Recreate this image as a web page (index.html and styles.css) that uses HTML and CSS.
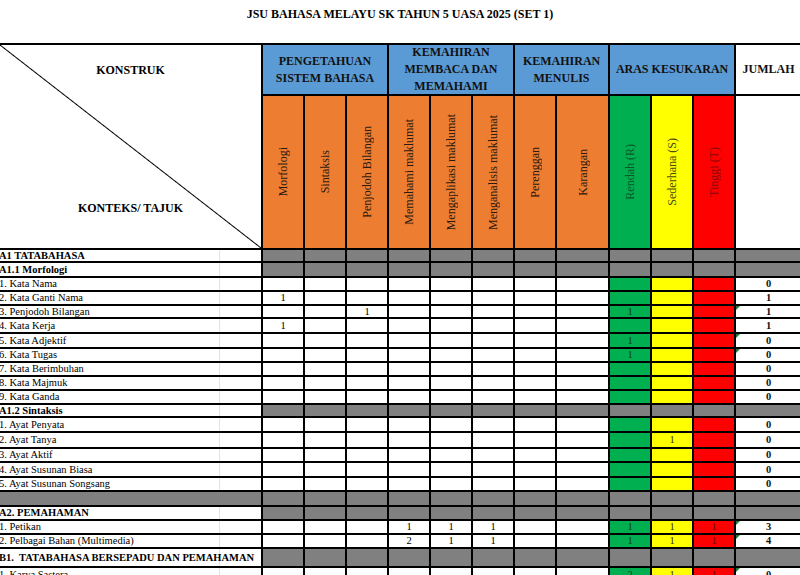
FILE: index.html
```html
<!DOCTYPE html>
<html lang="ms">
<head>
<meta charset="utf-8">
<title>JSU BAHASA MELAYU SK TAHUN 5 UASA 2025 (SET 1)</title>
<link rel="stylesheet" href="styles.css">
</head>
<body>
<div class="title">JSU BAHASA MELAYU SK TAHUN 5 UASA 2025 (SET 1)</div>
<table class="jsu">
  <colgroup>
    <col class="c-lbl"><col class="c-n"><col class="c-n"><col class="c-n"><col class="c-n"><col class="c-n"><col class="c-n"><col class="c-n"><col class="c-w"><col class="c-n"><col class="c-n"><col class="c-n"><col class="c-j">
  </colgroup>
  <tr class="hg">
    <td class="corner" rowspan="2"><div class="corner-in"><span>KONSTRUK</span><span>KONTEKS/ TAJUK</span></div></td>
    <td class="blue" colspan="3"><div class="gh">PENGETAHUAN SISTEM BAHASA</div></td>
    <td class="blue" colspan="3"><div class="gh">KEMAHIRAN MEMBACA DAN MEMAHAMI</div></td>
    <td class="blue" colspan="2"><div class="gh">KEMAHIRAN MENULIS</div></td>
    <td class="blue" colspan="3"><div class="gh">ARAS KESUKARAN</div></td>
    <td class="jh"><div class="gh">JUMLAH</div></td>
  </tr>
  <tr class="hv">
    <td class="o"><div class="vw"><span class="vt">Morfologi</span></div></td>
    <td class="o"><div class="vw"><span class="vt">Sintaksis</span></div></td>
    <td class="o"><div class="vw"><span class="vt">Penjodoh Bilangan</span></div></td>
    <td class="o"><div class="vw"><span class="vt">Memahami maklumat</span></div></td>
    <td class="o"><div class="vw"><span class="vt">Mengaplikasi maklumat</span></div></td>
    <td class="o"><div class="vw"><span class="vt">Menganalisis maklumat</span></div></td>
    <td class="o"><div class="vw"><span class="vt">Perenggan</span></div></td>
    <td class="o"><div class="vw"><span class="vt">Karangan</span></div></td>
    <td class="g"><div class="vw"><span class="vt">Rendah (R)</span></div></td>
    <td class="y"><div class="vw"><span class="vt">Sederhana (S)</span></div></td>
    <td class="rd"><div class="vw"><span class="vt">Tinggi (T)</span></div></td>
    <td></td>
  </tr>

  <tr class="sec r11"><td class="lbl b">A1 TATABAHASA</td><td></td><td></td><td></td><td></td><td></td><td></td><td></td><td></td><td></td><td></td><td></td><td></td></tr>
  <tr class="sec r13"><td class="lbl b">A1.1 Morfologi</td><td></td><td></td><td></td><td></td><td></td><td></td><td></td><td></td><td></td><td></td><td></td><td></td></tr>
  <tr class="r12"><td class="lbl">1. Kata Nama</td><td></td><td></td><td></td><td></td><td></td><td></td><td></td><td></td><td class="g"></td><td class="y"></td><td class="rd"></td><td class="jm">0</td></tr>
  <tr class="r12"><td class="lbl">2. Kata Ganti Nama</td><td>1</td><td></td><td></td><td></td><td></td><td></td><td></td><td></td><td class="g"></td><td class="y"></td><td class="rd"></td><td class="jm">1</td></tr>
  <tr class="r11"><td class="lbl">3. Penjodoh Bilangan</td><td></td><td></td><td>1</td><td></td><td></td><td></td><td></td><td></td><td class="g">1</td><td class="y"></td><td class="rd"></td><td class="jm flag">1</td></tr>
  <tr class="r13"><td class="lbl">4. Kata Kerja</td><td>1</td><td></td><td></td><td></td><td></td><td></td><td></td><td></td><td class="g"></td><td class="y"></td><td class="rd"></td><td class="jm">1</td></tr>
  <tr class="r13"><td class="lbl">5. Kata Adjektif</td><td></td><td></td><td></td><td></td><td></td><td></td><td></td><td></td><td class="g">1</td><td class="y"></td><td class="rd"></td><td class="jm flag">0</td></tr>
  <tr class="r12"><td class="lbl">6. Kata Tugas</td><td></td><td></td><td></td><td></td><td></td><td></td><td></td><td></td><td class="g">1</td><td class="y"></td><td class="rd"></td><td class="jm flag">0</td></tr>
  <tr class="r12"><td class="lbl">7. Kata Berimbuhan</td><td></td><td></td><td></td><td></td><td></td><td></td><td></td><td></td><td class="g"></td><td class="y"></td><td class="rd"></td><td class="jm">0</td></tr>
  <tr class="r12"><td class="lbl">8. Kata Majmuk</td><td></td><td></td><td></td><td></td><td></td><td></td><td></td><td></td><td class="g"></td><td class="y"></td><td class="rd"></td><td class="jm">0</td></tr>
  <tr class="r12"><td class="lbl">9. Kata Ganda</td><td></td><td></td><td></td><td></td><td></td><td></td><td></td><td></td><td class="g"></td><td class="y"></td><td class="rd"></td><td class="jm">0</td></tr>
  <tr class="sec r11"><td class="lbl b">A1.2 Sintaksis</td><td></td><td></td><td></td><td></td><td></td><td></td><td></td><td></td><td></td><td></td><td></td><td></td></tr>
  <tr class="r13"><td class="lbl">1. Ayat Penyata</td><td></td><td></td><td></td><td></td><td></td><td></td><td></td><td></td><td class="g"></td><td class="y"></td><td class="rd"></td><td class="jm">0</td></tr>
  <tr class="r14"><td class="lbl">2. Ayat Tanya</td><td></td><td></td><td></td><td></td><td></td><td></td><td></td><td></td><td class="g"></td><td class="y">1</td><td class="rd"></td><td class="jm">0</td></tr>
  <tr class="r12"><td class="lbl">3. Ayat Aktif</td><td></td><td></td><td></td><td></td><td></td><td></td><td></td><td></td><td class="g"></td><td class="y"></td><td class="rd"></td><td class="jm">0</td></tr>
  <tr class="r13"><td class="lbl">4. Ayat Susunan Biasa</td><td></td><td></td><td></td><td></td><td></td><td></td><td></td><td></td><td class="g"></td><td class="y"></td><td class="rd"></td><td class="jm">0</td></tr>
  <tr class="r12"><td class="lbl">5. Ayat Susunan Songsang</td><td></td><td></td><td></td><td></td><td></td><td></td><td></td><td></td><td class="g"></td><td class="y"></td><td class="rd"></td><td class="jm">0</td></tr>
  <tr class="gap r13"><td></td><td></td><td></td><td></td><td></td><td></td><td></td><td></td><td></td><td></td><td></td><td></td><td></td></tr>
  <tr class="sec r12"><td class="lbl b">A2. PEMAHAMAN</td><td></td><td></td><td></td><td></td><td></td><td></td><td></td><td></td><td></td><td></td><td></td><td></td></tr>
  <tr class="r12"><td class="lbl">1. Petikan</td><td></td><td></td><td></td><td>1</td><td>1</td><td>1</td><td></td><td></td><td class="g">1</td><td class="y">1</td><td class="rd">1</td><td class="jm flag">3</td></tr>
  <tr class="r12"><td class="lbl">2. Pelbagai Bahan (Multimedia)</td><td></td><td></td><td></td><td>2</td><td>1</td><td>1</td><td></td><td></td><td class="g">1</td><td class="y">1</td><td class="rd">1</td><td class="jm flag">4</td></tr>
  <tr class="sec r17"><td class="lbl b">B1.&nbsp; TATABAHASA BERSEPADU DAN PEMAHAMAN</td><td></td><td></td><td></td><td></td><td></td><td></td><td></td><td></td><td></td><td></td><td></td><td></td></tr>
  <tr class="r14"><td class="lbl">1. Karya Sastera</td><td></td><td></td><td></td><td></td><td></td><td></td><td></td><td></td><td class="g">2</td><td class="y">1</td><td class="rd">1</td><td class="jm flag">0</td></tr>
</table>
</body>
</html>
```

FILE: styles.css
```css
html, body {
  margin: 0;
  padding: 0;
  background: #fff;
  width: 800px;
  height: 575px;
  overflow: hidden;
}

body {
  font-family: "Liberation Serif", "Times New Roman", serif;
  color: #000;
}

.title {
  width: 800px;
  height: 43px;
  box-sizing: border-box;
  padding-top: 7px;
  font-size: 12px;
  line-height: 14px;
  font-weight: bold;
  text-align: center;
}

.jsu {
  border-collapse: separate;
  border-spacing: 2px;
  background: #000;
  table-layout: fixed;
  width: 805px;
  margin-left: -2px;
}

.c-lbl { width: 261px; }
.c-n { width: 40px; }
.c-w { width: 51px; }
.c-j { width: 65px; }

.jsu td {
  padding: 0;
  background: #fff;
  font-size: 10.5px;
  line-height: 12px;
  text-align: center;
  vertical-align: middle;
  white-space: nowrap;
  overflow: hidden;
}

/* header: corner cell with diagonal */
.jsu td.corner {
  background: linear-gradient(to bottom left, #fff calc(50% - 1px), #000 50%, #fff calc(50% + 1px));
}

.corner-in {
  height: 203px;
  box-sizing: border-box;
  padding: 18px 0 33px;
  display: flex;
  flex-direction: column;
  justify-content: space-between;
  align-items: center;
  font-size: 12px;
  line-height: 14px;
  font-weight: bold;
}

/* header: groups */
.jsu td.blue { background: #5b9bd5; }

.gh {
  height: 49px;
  display: flex;
  align-items: center;
  justify-content: center;
  white-space: normal;
  font-size: 12px;
  line-height: 17px;
  font-weight: bold;
  color: #111;
}

.hv td { height: 152px; }

.vw {
  height: 152px;
  display: flex;
  align-items: center;
  justify-content: center;
}

.vt {
  writing-mode: vertical-rl;
  transform: rotate(180deg);
  font-size: 12px;
  line-height: 14px;
  white-space: nowrap;
}

.jsu td.o { background: #ed7d31; color: #2a1a10; }
.jsu td.g { background: #00b050; color: #0b3d1c; }
.jsu td.y { background: #ffff00; color: #33330a; }
.jsu td.rd { background: #ff0000; color: #6e0000; }

.hv td.g .vt { color: #0a5a28; }
.hv td.y .vt { color: #4a4a10; }
.hv td.rd .vt { color: #8a0a0a; }

/* body rows */
.r11 td { height: 11px; line-height: 11px; }
.r12 td { height: 12px; line-height: 12px; }
.r13 td { height: 13px; line-height: 13px; }
.r14 td { height: 14px; line-height: 14px; }
.r17 td { height: 17px; line-height: 17px; }

.jsu td.lbl {
  text-align: left;
  text-indent: -1px;
  background: linear-gradient(to right, transparent 219px, #e2e2e2 219px, #e2e2e2 220px, transparent 220px), #fff;
}

.jsu td.b { font-weight: bold; }

.sec td:not(.lbl),
.gap td,
.jsu .gap td.lbl { background: #808080; }

.jsu td.jm { font-weight: bold; color: #111; }

.jsu td.flag { position: relative; }

.jsu td.flag::before {
  content: "";
  position: absolute;
  left: 0;
  top: 0;
  border-top: 4px solid #1f7a3a;
  border-right: 4px solid transparent;
}
```
